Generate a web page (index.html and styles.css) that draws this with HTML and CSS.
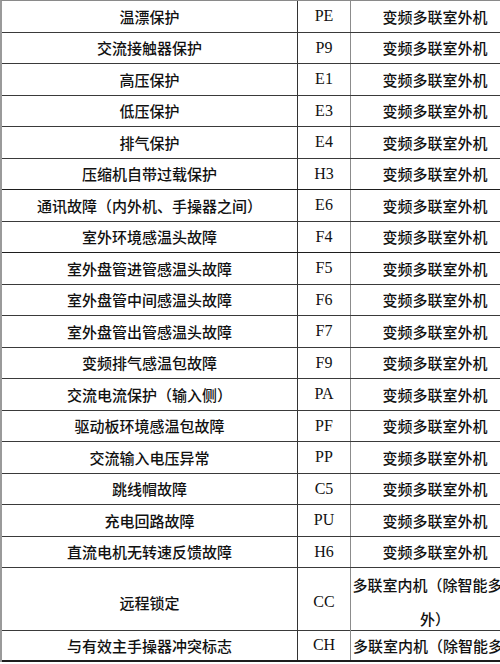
FILE: index.html
```html
<!DOCTYPE html>
<html lang="zh-CN">
<head>
<meta charset="utf-8">
<title>故障代码表</title>
<link rel="stylesheet" href="styles.css">
</head>
<body>
<div class="table">
  <div class="row"><div class="c1">温漂保护</div><div class="c2">PE</div><div class="c3">变频多联室外机</div></div>
  <div class="row"><div class="c1">交流接触器保护</div><div class="c2">P9</div><div class="c3">变频多联室外机</div></div>
  <div class="row"><div class="c1">高压保护</div><div class="c2">E1</div><div class="c3">变频多联室外机</div></div>
  <div class="row"><div class="c1">低压保护</div><div class="c2">E3</div><div class="c3">变频多联室外机</div></div>
  <div class="row"><div class="c1">排气保护</div><div class="c2">E4</div><div class="c3">变频多联室外机</div></div>
  <div class="row thick"><div class="c1">压缩机自带过载保护</div><div class="c2">H3</div><div class="c3">变频多联室外机</div></div>
  <div class="row"><div class="c1">通讯故障（内外机、手操器之间）</div><div class="c2">E6</div><div class="c3">变频多联室外机</div></div>
  <div class="row thick"><div class="c1">室外环境感温头故障</div><div class="c2">F4</div><div class="c3">变频多联室外机</div></div>
  <div class="row"><div class="c1">室外盘管进管感温头故障</div><div class="c2">F5</div><div class="c3">变频多联室外机</div></div>
  <div class="row"><div class="c1">室外盘管中间感温头故障</div><div class="c2">F6</div><div class="c3">变频多联室外机</div></div>
  <div class="row"><div class="c1">室外盘管出管感温头故障</div><div class="c2">F7</div><div class="c3">变频多联室外机</div></div>
  <div class="row"><div class="c1">变频排气感温包故障</div><div class="c2">F9</div><div class="c3">变频多联室外机</div></div>
  <div class="row"><div class="c1">交流电流保护（输入侧）</div><div class="c2">PA</div><div class="c3">变频多联室外机</div></div>
  <div class="row"><div class="c1">驱动板环境感温包故障</div><div class="c2">PF</div><div class="c3">变频多联室外机</div></div>
  <div class="row"><div class="c1">交流输入电压异常</div><div class="c2">PP</div><div class="c3">变频多联室外机</div></div>
  <div class="row"><div class="c1">跳线帽故障</div><div class="c2">C5</div><div class="c3">变频多联室外机</div></div>
  <div class="row"><div class="c1">充电回路故障</div><div class="c2">PU</div><div class="c3">变频多联室外机</div></div>
  <div class="row"><div class="c1">直流电机无转速反馈故障</div><div class="c2">H6</div><div class="c3">变频多联室外机</div></div>
  <div class="row tall"><div class="c1">远程锁定</div><div class="c2">CC</div><div class="c3 wrap">多联室内机（除智能多联外）</div></div>
  <div class="row last"><div class="c1">与有效主手操器冲突标志</div><div class="c2">CH</div><div class="c3 nowrap">多联室内机（除智能多联外）</div></div>
</div>
</body>
</html>
```
FILE: styles.css
```css
html, body {
  margin: 0;
  padding: 0;
  background: #ffffff;
  overflow: hidden;
}

.table {
  width: max-content;
  border-top: 1px solid #8a8a8a;
  border-left: 2px solid #9a9a9a;
  color: #111111;
  font-family: "Noto Sans CJK SC", "Noto Sans", sans-serif;
  font-size: 15px;
  font-weight: 500;
}

.row {
  display: grid;
  grid-template-columns: 296px 53px 168px;
  height: 31.5px;
  box-sizing: border-box;
  border-bottom: 1px solid #3a3a3a;
}

.row.thick {
  border-bottom: 1.5px solid #1e1e1e;
}

.row.tall {
  height: 62.5px;
}

.row.last {
  border-bottom: 2px solid #1e1e1e;
}

.c1, .c2, .c3 {
  display: flex;
  align-items: center;
  justify-content: center;
  white-space: nowrap;
  overflow: hidden;
}

.c1 {
  border-right: 1px solid #333333;
}

.c2 {
  border-right: 1px solid #8c8c8c;
  font-family: "Liberation Serif", "DejaVu Serif", serif;
  font-size: 16px;
  font-weight: 400;
}

.c3.wrap {
  display: block;
  white-space: normal;
  text-align: center;
  line-height: 34px;
  overflow: visible;
}

.c3.nowrap {
  justify-content: flex-start;
  padding-left: 2px;
}
```
